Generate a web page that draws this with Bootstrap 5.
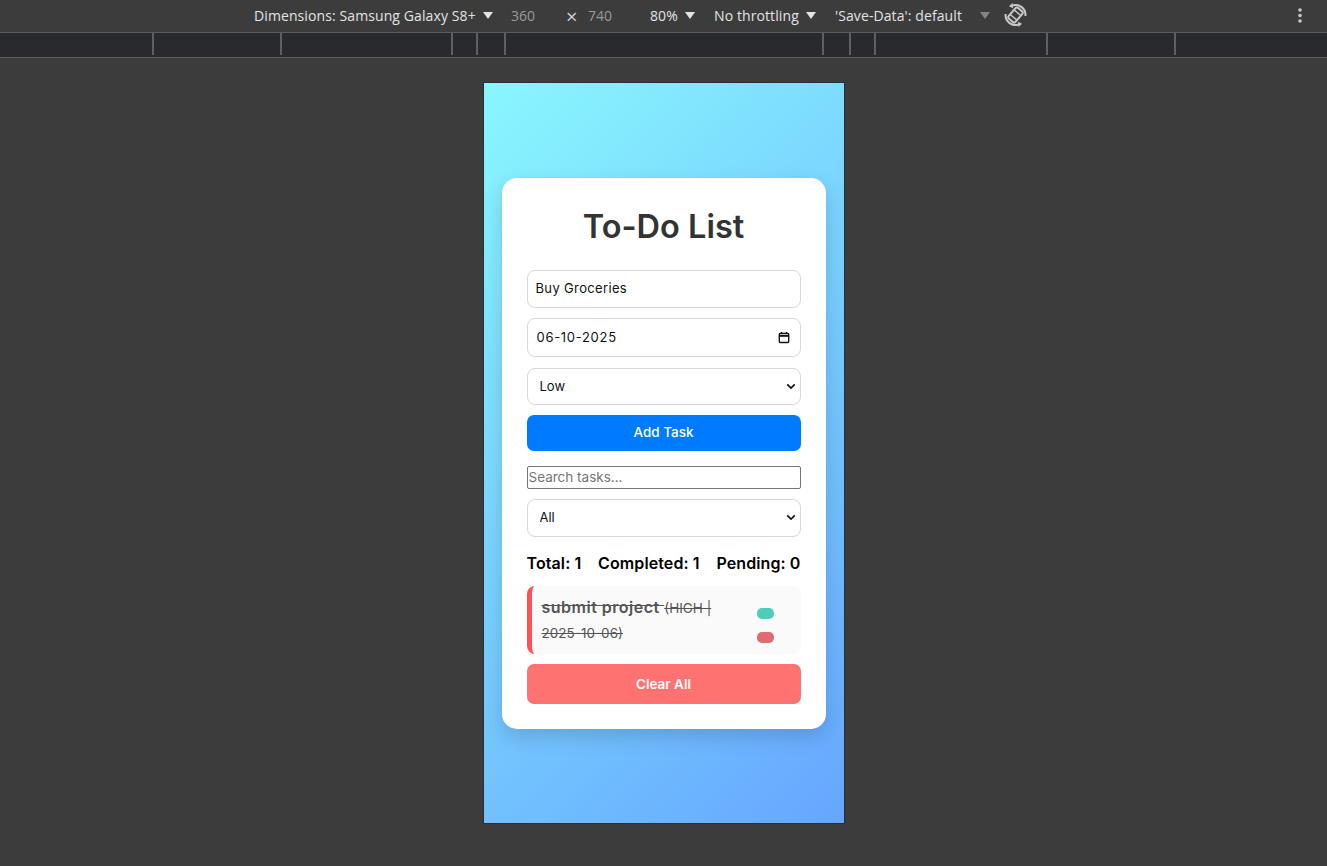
<!DOCTYPE html>
<html lang="en">
  <head>
    <meta charset="UTF-8" />
    <meta name="viewport" content="width=device-width, initial-scale=1.0" />
    <title>To-Do List</title>
    <link
      href="https://cdn.jsdelivr.net/npm/bootstrap@5.3.0/dist/css/bootstrap.min.css"
      rel="stylesheet"
    />
    <style>
      html, body {
        height: 100%;
      }
      body {
        background-color: #3c3c3c;
        font-family: "Inter", "Liberation Sans", sans-serif;
        overflow: hidden;
      }
      /* devtools bar */
      .dev-bar {
        height: 33px;
        padding-left: 254px;
        padding-bottom: 2px;
        border-bottom: 1px solid #5c5c5c;
        color: #e3e3e3;
        font-family: "Open Sans", "Liberation Sans", sans-serif;
        font-size: 14px;
        white-space: nowrap;
      }
      .dev-text { letter-spacing: 0.1px; }
      .dev-dim { color: #9a9a9a; }
      .dev-arrow {
        width: 0;
        height: 0;
        border-left: 5px solid transparent;
        border-right: 5px solid transparent;
        border-top: 7px solid #e3e3e3;
      }
      .dev-arrow-dim { border-top-color: #858585; }
      .w-device { width: 229px; }
      .w-num { width: 55px; margin-left: 18px; }
      .w-times { width: 22px; margin-top: 4px; color: #d0d0d0; font-size: 20px; line-height: 1; }
      .w-num2 { width: 62px; }
      .w-zoom { width: 35px; }
      .w-throttle { width: 92px; margin-left: 19px; }
      .gap-throttle { margin-left: 0; }
      .w-save { width: 145px; margin-left: 19px; }
      .rotate-icon { margin-left: 14px; }
      .kebab-icon { margin-left: 271px; }
      .dev-ruler {
        height: 25px;
        border-bottom: 1px solid #5c5c5c;
        background-color: #292a2d;
        background-image:
          linear-gradient(#5f6062, #5f6062), linear-gradient(#5f6062, #5f6062),
          linear-gradient(#5f6062, #5f6062), linear-gradient(#5f6062, #5f6062),
          linear-gradient(#5f6062, #5f6062), linear-gradient(#5f6062, #5f6062),
          linear-gradient(#5f6062, #5f6062), linear-gradient(#5f6062, #5f6062),
          linear-gradient(#5f6062, #5f6062), linear-gradient(#5f6062, #5f6062);
        background-size: 2px 22px;
        background-repeat: no-repeat;
        background-position-y: 0;
        background-position-x: 152px, 280px, 451px, 476px, 504px, 822px, 849px, 874px, 1046px, 1174px;
      }
      /* device frame */
      .device-wrap {
        padding-top: 25px;
      }
      .device {
        width: 360px;
        height: 740px;
        background: linear-gradient(135deg, #89f7fe, #66a6ff);
        outline: 1px solid #25313a;
      }
      /* the app */
      .todo-card {
        width: 324px;
        height: 551px;
        padding: 25px;
        background: #fff;
        border-radius: 15px;
        box-shadow: 0 8px 20px rgba(0, 0, 0, 0.15);
      }
      .todo-title {
        height: 52px;
        margin: 0 0 15px;
        color: #333;
        font-size: 32.5px;
        font-weight: 600;
        line-height: 48px;
        text-align: center;
      }
      .todo-field.form-control,
      .todo-field.form-select {
        height: 38px;
        margin-bottom: 10px;
        padding: 0 8px 1px;
        border: 1px solid #d8d8dc;
        border-radius: 8px;
        color: #111;
        font-size: 13px;
        letter-spacing: 0.35px;
        line-height: 34px;
      }
      .todo-field.form-select {
        padding: 0 8px 1px 12px;
        letter-spacing: 0;
        background-image: url("data:image/svg+xml,%3csvg xmlns='http://www.w3.org/2000/svg' viewBox='0 0 12 8'%3e%3cpath fill='none' stroke='%23111' stroke-width='2' d='M1.5 1.5 6 6l4.5-4.5'/%3e%3c/svg%3e");
        background-position: right 4px center;
        background-size: 10px 7px;
      }
      .todo-field.priority-select {
        height: 37px;
        padding-bottom: 0;
      }
      .date-wrap .todo-field {
        height: 39px;
        margin-bottom: 11px;
        padding-left: 9px;
        letter-spacing: 0.7px;
      }
      .date-icon {
        position: absolute;
        top: 13px;
        right: 11px;
      }
      .add-btn.btn {
        height: 36px;
        padding: 0;
        border: 0;
        border-radius: 7px;
        background: #007bff;
        color: #fff;
        font-size: 13.5px;
        font-weight: 500;
      }
      .search-box {
        display: block;
        width: 100%;
        height: 23px;
        margin: 15px 0 10px;
        padding: 0 1px;
        border: 1px solid #767676;
        border-radius: 2px;
        font-size: 13.5px;
      }
      .search-box::placeholder { color: #757575; }
      .todo-stats {
        margin: 15px 0 12px;
        color: #000;
        font-size: 16px;
        font-weight: 600;
        letter-spacing: 0.1px;
        line-height: 22px;
      }
      .task-item {
        height: 68px;
        padding: 9px 27px 9px 10px;
        margin-bottom: 10px;
        border-left: 5px solid #ff5252;
        border-radius: 8px;
        background: #fafafa;
      }
      .task-text {
        width: 190px;
        color: #555;
        font-size: 13.5px;
        line-height: 25px;
        text-decoration: line-through;
      }
      .task-text strong {
        font-size: 16px;
        font-weight: 600;
        letter-spacing: 0.5px;
      }
      .task-actions {
        margin-top: 13px;
        gap: 13px;
      }
      .pill {
        display: block;
        width: 17px;
        height: 11px;
        padding: 0;
        border: 0;
        border-radius: 5px;
      }
      .pill-done { background: #4ecdb8; }
      .pill-del { background: #e06c70; }
      .clear-btn.btn {
        height: 40px;
        padding: 1px 0 0;
        border: 0;
        border-radius: 7px;
        background: #ff7272;
        color: #fff;
        font-size: 13.5px;
        font-weight: 600;
      }
    </style>
  </head>
  <body>
    <!-- Device toolbar -->
    <div class="dev-bar d-flex align-items-center">
      <span class="dev-text w-device">Dimensions: Samsung Galaxy S8+</span>
      <span class="dev-arrow"></span>
      <span class="dev-dim w-num">360</span>
      <span class="w-times">×</span>
      <span class="dev-dim w-num2">740</span>
      <span class="dev-text w-zoom">80%</span>
      <span class="dev-arrow"></span>
      <span class="dev-text w-throttle">No throttling</span>
      <span class="dev-arrow gap-throttle"></span>
      <span class="dev-text w-save">'Save-Data': default</span>
      <span class="dev-arrow dev-arrow-dim"></span>
      <svg class="rotate-icon" width="23" height="24" viewBox="0 0 23 24" fill="none" stroke="#c9c9c9">
        <g transform="rotate(40 11.5 12)" stroke-width="2">
          <rect x="7" y="5" width="9" height="14" rx="2" />
          <path d="M7.5 9h8M7.5 15h8" stroke-width="1.4" />
        </g>
        <path d="M7.5 2.8A10 10 0 0 1 21.4 13" stroke-width="2" />
        <path d="M15.5 21.2A10 10 0 0 1 1.6 11" stroke-width="2" />
        <path d="M8.5 0 5 3.2l4 2z" fill="#c9c9c9" stroke="none" />
        <path d="M14.5 24l3.5-3.2-4-2z" fill="#c9c9c9" stroke="none" />
      </svg>
      <svg class="kebab-icon" width="4" height="15" viewBox="0 0 4 15" fill="#c9c9c9">
        <circle cx="2" cy="2" r="1.8" />
        <circle cx="2" cy="7.5" r="1.8" />
        <circle cx="2" cy="13" r="1.8" />
      </svg>
    </div>
    <div class="dev-ruler"></div>

    <div class="device-wrap d-flex justify-content-center">
      <div class="device d-flex align-items-center justify-content-center">
        <div class="todo-card">
          <h1 class="todo-title">To-Do List</h1>
          <input class="todo-field form-control" type="text" value="Buy Groceries" />
          <div class="date-wrap position-relative">
            <input class="todo-field form-control" type="text" value="06-10-2025" />
            <svg class="date-icon" width="12" height="13" viewBox="0 0 14 14" fill="none" stroke="#111" stroke-width="1.6">
              <rect x="1.5" y="2.2" width="11" height="10.6" rx="1" />
              <path d="M1.5 5h11" stroke-width="2.4" />
              <path d="M4 .5v2M10 .5v2" />
            </svg>
          </div>
          <select class="todo-field priority-select form-select">
            <option>Low</option>
            <option>Medium</option>
            <option>High</option>
          </select>
          <button class="add-btn btn w-100" type="button">Add Task</button>
          <input class="search-box" type="text" placeholder="Search tasks..." />
          <select class="todo-field form-select mb-0">
            <option>All</option>
            <option>Completed</option>
            <option>Pending</option>
          </select>
          <div class="todo-stats d-flex justify-content-between">
            <span>Total: 1</span>
            <span>Completed: 1</span>
            <span>Pending: 0</span>
          </div>
          <div class="task-item d-flex justify-content-between">
            <div class="task-text"><strong>submit project </strong>(HIGH | 2025-10-06)</div>
            <div class="task-actions d-flex flex-column">
              <button class="pill pill-done" type="button"></button>
              <button class="pill pill-del" type="button"></button>
            </div>
          </div>
          <button class="clear-btn btn w-100" type="button">Clear All</button>
        </div>
      </div>
    </div>
  </body>
</html>
